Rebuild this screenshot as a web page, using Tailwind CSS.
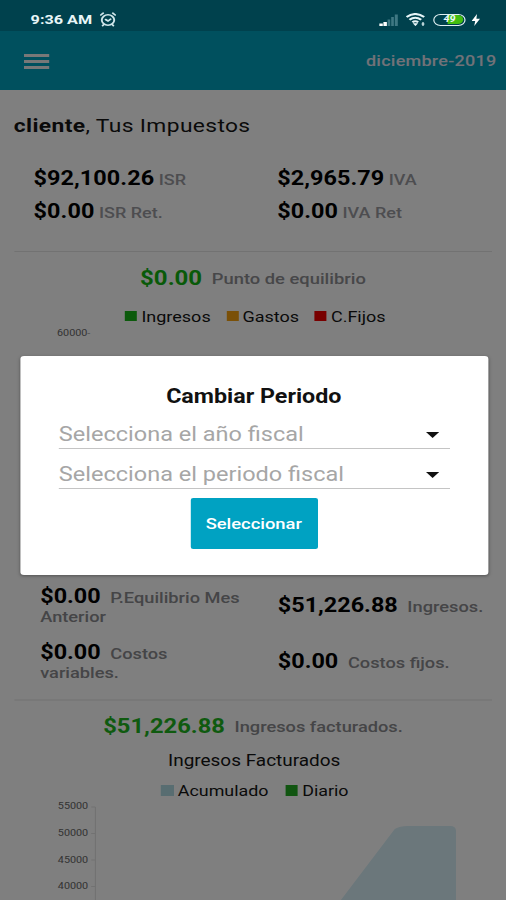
<!DOCTYPE html>
<html lang="es">
<head>
<meta charset="utf-8">
<title>Tus Impuestos</title>
<script src="https://cdn.jsdelivr.net/npm/@tailwindcss/browser@4"></script>
</head>
<body class="w-[506px] h-[900px] overflow-hidden bg-white">
<div class="relative w-[421.67px] h-[900px] origin-top-left scale-x-120 overflow-hidden font-['Roboto',sans-serif] text-black whitespace-nowrap">

  <div class="flex flex-col h-[900px] bg-white">
    <div class="h-[31px] shrink-0 bg-[#00829a]"></div>
    <header class="h-[59px] shrink-0 bg-[#00a0bd] flex items-center justify-between pl-[20px] pr-[8px]">
      <div class="flex flex-col gap-[3px] w-[20.5px] pt-[1px]">
        <div class="h-[3px] bg-[#f0f0f0]"></div><div class="h-[3px] bg-[#f0f0f0]"></div><div class="h-[3px] bg-[#f0f0f0]"></div>
      </div>
      <div class="text-[15px] font-medium tracking-[0.2px] text-[#e4e4f0] pt-[2px]">diciembre-2019</div>
    </header>

    <h1 class="h-[70px] shrink-0 pl-[11.5px] leading-[72px] text-[19px] tracking-[0.3px] text-[#141414]"><b>cliente</b>, Tus Impuestos</h1>

    <section class="h-[91px] shrink-0 grid grid-cols-[203px_1fr] grid-rows-[33px_33px] pl-[28px] pt-[2px] text-[15px] font-medium text-[#9a9aa0] leading-[33px]">
      <div><b class="text-[19.5px] tracking-[0.05px] text-black font-bold">$92,100.26</b> ISR</div>
      <div><b class="text-[19.5px] tracking-[0.05px] text-black font-bold">$2,965.79</b> IVA</div>
      <div><b class="text-[19.5px] tracking-[0.05px] text-black font-bold">$0.00</b> ISR Ret.</div>
      <div><b class="text-[19.5px] tracking-[0.05px] text-black font-bold">$0.00</b> IVA Ret</div>
    </section>
    <div class="h-px shrink-0 mx-[12px] bg-[#e4e4e4]"></div>

    <section class="h-[447px] shrink-0 flex flex-col">
      <div class="h-[52px] flex items-center justify-center gap-[8px] text-[15.3px] font-medium text-[#8e8e92]"><b class="text-[20px] text-[#12b412]">$0.00</b><span class="pt-[3px]">Punto de equilibrio</span></div>
      <div class="h-[24px] flex items-center justify-center gap-[13px] text-[15px] pl-[4px] text-[#141414]">
        <span class="flex items-center gap-[3.5px]"><i class="w-[10px] h-[10px] bg-[#18b418]"></i><span class="pt-[3px]">Ingresos</span></span>
        <span class="flex items-center gap-[3.5px]"><i class="w-[10px] h-[10px] bg-[#f4a010]"></i><span class="pt-[3px]">Gastos</span></span>
        <span class="flex items-center gap-[3.5px]"><i class="w-[10px] h-[10px] bg-[#f00000]"></i><span class="pt-[3px]">C.Fijos</span></span>
      </div>
      <div class="h-[250px] pl-[47.5px] text-[9px] leading-[10px] text-[#666]">60000<span class="text-[#999]">-</span></div>
      <div class="grid grid-cols-[198px_1fr] grid-rows-[56px_56px] pl-[33.5px] pt-[8px] text-[15.2px] font-medium text-[#8a8a8e]">
        <div class="leading-[19px] pt-[1px]"><b class="text-[19.5px] text-black mr-[8px]">$0.00</b>P.Equilibrio Mes<br>Anterior</div>
        <div class="pt-[10px] leading-[20px]"><b class="text-[19.5px] text-black mr-[8px]">$51,226.88</b>Ingresos.</div>
        <div class="leading-[19px] pt-[1px]"><b class="text-[19.5px] text-black mr-[8px]">$0.00</b>Costos<br>variables.</div>
        <div class="pt-[10px] leading-[20px]"><b class="text-[19.5px] text-black mr-[8px]">$0.00</b>Costos fijos.</div>
      </div>
    </section>
    <div class="h-[2px] shrink-0 mx-[12px] bg-[#f0f0f0]"></div>

    <section class="flex flex-col">
      <div class="h-[50px] pt-[1px] flex items-center justify-center gap-[8px] text-[15.2px] font-medium text-[#8a8a8e]"><b class="text-[19.8px] text-[#1eb41e]">$51,226.88</b><span class="pt-[2px]">Ingresos facturados.</span></div>
      <div class="h-[20px] pl-[2px] text-center text-[15.8px] leading-[20px] text-[#141414]">Ingresos Facturados</div>
      <div class="h-[30px] pt-[8px] flex items-center justify-center gap-[14px] text-[14.9px] pl-[3px] text-[#141414]">
        <span class="flex items-center gap-[3.5px]"><i class="w-[10.5px] h-[11px] bg-[#b0dae2]"></i><span class="pt-[2px]">Acumulado</span></span>
        <span class="flex items-center gap-[3.5px]"><i class="w-[10.5px] h-[11px] bg-[#22aa22]"></i><span class="pt-[2px]">Diario</span></span>
      </div>
      <svg class="block w-[421.67px] h-[100px] font-['Roboto',sans-serif]" viewBox="0 0 421.67 100">
        <path d="M283.5 100 L329 28 Q333 25 340 25 H375 Q380 25 380 30 V100Z" fill="#d6eef6"/>
        <path d="M79.500 6V100M76 6h3.500M76 32.500h3.500M76 59h3.500M76 85.500h3.500" stroke="#e4e4e4" fill="none"/>
        <g font-size="9" fill="#666" text-anchor="end"><text x="73.500" y="8.500">55000</text><text x="73.500" y="35.500">50000</text><text x="73.500" y="62">45000</text><text x="73.500" y="88">40000</text></g>
      </svg>
    </section>
  </div>

  <div class="absolute inset-0 bg-black/50"></div>

  <div class="absolute inset-x-0 top-0 h-[31px] flex items-center justify-between pl-[25.5px] pr-[21.500px] pt-[8px] text-[#e8f6f8]">
    <div class="flex items-center gap-[6px]">
      <span class="text-[13.5px] font-bold">9:36 AM</span>
      <svg class="w-[14px] h-[15px]" viewBox="0 0 14 15" fill="none" stroke="#cfe6ea" stroke-width="1.600" stroke-linecap="round"><circle cx="7" cy="8" r="5.200"/><path d="M1 3 3 1.200M13 3 11 1.200M5 7.500 7 9 9.200 7.200M3.500 12.500 2.500 13.700M10.500 12.500 11.500 13.700"/></svg>
    </div>
    <div class="flex items-center gap-[6px]">
      <svg class="w-[16px] h-[12px]" viewBox="0 0 16 12"><path d="M0 12v-2.500h3V12zM3.500 12V8h2.900v4z" fill="#fff"/><path d="M7 12V5.500H9.200V12zM10 12V3H12.200v9zM13 12V.5h2.500V12z" fill="#3f7883"/></svg>
      <svg class="w-[17px] h-[13px]" viewBox="0 0 17 13" fill="none" stroke="#e6f5f8" stroke-width="2"><path d="M.8 4Q8 -2 15.500 4M3.200 6.800Q8 2.800 13 6.800M5.700 9.300Q8 7.300 10.500 9.300"/><path d="M7 10.800h2.400L8.200 12.300zM14.500 9v4M13.300 11h2.400" stroke-width="1" fill="#e6f5f8"/></svg>
      <div class="relative w-[27px] h-[12px] rounded-full border-[1.5px] border-[#e0f0f2] flex items-center justify-center overflow-hidden">
        <div class="absolute left-[11px] right-[1px] inset-y-[0.500px] bg-[#43bd10] rounded-r-full"></div>
        <span class="relative text-[9px] leading-[9px] font-bold italic">49</span>
      </div>
      <svg class="w-[7px] h-[12px] -ml-[1px]" viewBox="0 0 7 12"><path d="M4.500 0 0 7h3L2.200 12 7 4.700H4z" fill="#fff"/></svg>
    </div>
  </div>

  <div role="dialog" class="absolute left-[16.5px] top-[356px] w-[390px] h-[219px] rounded-[3px] bg-white shadow-[0_1px_3px_rgba(0,0,0,0.35)] flex flex-col items-center pt-[29px]">
    <h2 class="text-[19.4px] leading-[24px] font-bold text-[#111]">Cambiar Periodo</h2>
    <div class="mt-[11px] w-[326px] h-[29px] border-b border-[#c4c4c4] flex items-center justify-between pl-[0.500px] pr-[8.500px] text-[19.6px] text-[#a6a6a6]"><span class="pt-[2px]">Selecciona el año fiscal</span><svg class="w-[11px] h-[6px] mt-[2px]" viewBox="0 0 11 6"><path d="M0 0h11L5.500 6z" fill="#111"/></svg></div>
    <div class="mt-[11px] w-[326px] h-[29px] border-b border-[#c4c4c4] flex items-center justify-between pl-[0.500px] pr-[8.500px] text-[19.6px] text-[#a6a6a6]"><span class="pt-[2px]">Selecciona el periodo fiscal</span><svg class="w-[11px] h-[6px] mt-[2px]" viewBox="0 0 11 6"><path d="M0 0h11L5.500 6z" fill="#111"/></svg></div>
    <button class="mt-[9px] w-[106px] h-[51px] pt-[1px] rounded-[2px] bg-[#00a2c2] text-white text-[15.3px] font-medium">Seleccionar</button>
  </div>
</div>
</body>
</html>
